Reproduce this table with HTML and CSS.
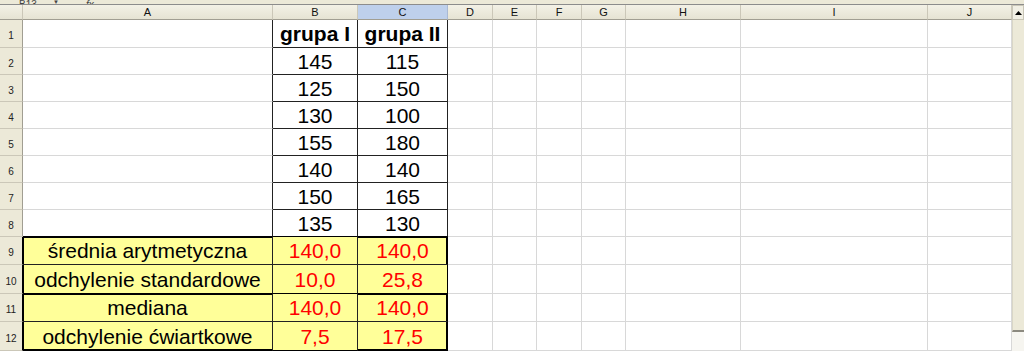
FILE: index.html
```html
<!DOCTYPE html>
<html lang="pl">
<head>
<meta charset="utf-8">
<title>Arkusz</title>
<link rel="stylesheet" href="styles.css">
</head>
<body>
<div class="toolbar">
  <div class="tb-inner"><span class="namebox">B13</span><span class="drop">▼</span><span class="fx">fx</span></div>
</div>
<div class="window">
  <div class="sheet">
    <div class="row hdr">
      <div class="corner"></div>
      <div class="ch">A</div><div class="ch">B</div><div class="ch sel">C</div><div class="ch">D</div><div class="ch">E</div><div class="ch">F</div><div class="ch">G</div><div class="ch">H</div><div class="ch">I</div><div class="ch">J</div>
    </div>
    <div class="row r28">
      <div class="rh">1</div><div class="c edge-r"></div><div class="c bd b">grupa I</div><div class="c bd b">grupa II</div><div class="c"></div><div class="c"></div><div class="c"></div><div class="c"></div><div class="c"></div><div class="c"></div><div class="c"></div>
    </div>
    <div class="row">
      <div class="rh">2</div><div class="c edge-r"></div><div class="c bd">145</div><div class="c bd">115</div><div class="c"></div><div class="c"></div><div class="c"></div><div class="c"></div><div class="c"></div><div class="c"></div><div class="c"></div>
    </div>
    <div class="row">
      <div class="rh">3</div><div class="c edge-r"></div><div class="c bd">125</div><div class="c bd">150</div><div class="c"></div><div class="c"></div><div class="c"></div><div class="c"></div><div class="c"></div><div class="c"></div><div class="c"></div>
    </div>
    <div class="row">
      <div class="rh">4</div><div class="c edge-r"></div><div class="c bd">130</div><div class="c bd">100</div><div class="c"></div><div class="c"></div><div class="c"></div><div class="c"></div><div class="c"></div><div class="c"></div><div class="c"></div>
    </div>
    <div class="row">
      <div class="rh">5</div><div class="c edge-r"></div><div class="c bd">155</div><div class="c bd">180</div><div class="c"></div><div class="c"></div><div class="c"></div><div class="c"></div><div class="c"></div><div class="c"></div><div class="c"></div>
    </div>
    <div class="row">
      <div class="rh">6</div><div class="c edge-r"></div><div class="c bd">140</div><div class="c bd">140</div><div class="c"></div><div class="c"></div><div class="c"></div><div class="c"></div><div class="c"></div><div class="c"></div><div class="c"></div>
    </div>
    <div class="row">
      <div class="rh">7</div><div class="c edge-r"></div><div class="c bd">150</div><div class="c bd">165</div><div class="c"></div><div class="c"></div><div class="c"></div><div class="c"></div><div class="c"></div><div class="c"></div><div class="c"></div>
    </div>
    <div class="row">
      <div class="rh">8</div><div class="c edge-r bb"></div><div class="c bd">135</div><div class="c bd">130</div><div class="c"></div><div class="c"></div><div class="c"></div><div class="c"></div><div class="c"></div><div class="c"></div><div class="c"></div>
    </div>
    <div class="row r28">
      <div class="rh k">9</div><div class="c y top">średnia arytmetyczna</div><div class="c y top red">140,0</div><div class="c y top right red">140,0</div><div class="c"></div><div class="c"></div><div class="c"></div><div class="c"></div><div class="c"></div><div class="c"></div><div class="c"></div>
    </div>
    <div class="row r29">
      <div class="rh k">10</div><div class="c y">odchylenie standardowe</div><div class="c y red">10,0</div><div class="c y right red">25,8</div><div class="c"></div><div class="c"></div><div class="c"></div><div class="c"></div><div class="c"></div><div class="c"></div><div class="c"></div>
    </div>
    <div class="row r28">
      <div class="rh k">11</div><div class="c y top">mediana</div><div class="c y top red">140,0</div><div class="c y top right red">140,0</div><div class="c"></div><div class="c"></div><div class="c"></div><div class="c"></div><div class="c"></div><div class="c"></div><div class="c"></div>
    </div>
    <div class="row r29">
      <div class="rh k">12</div><div class="c y bot">odchylenie ćwiartkowe</div><div class="c y bot red">7,5</div><div class="c y bot right red">17,5</div><div class="c"></div><div class="c"></div><div class="c"></div><div class="c"></div><div class="c"></div><div class="c"></div><div class="c"></div>
    </div>
  </div>
  <div class="vscroll">
    <div class="sb-btn"><svg width="7" height="4" viewBox="0 0 7 4"><path d="M0 4 L3.5 0 L7 4 Z" fill="#000"/></svg></div>
    <div class="sb-thumb"></div>
    <div class="sb-track"></div>
  </div>
</div>
</body>
</html>
```

FILE: styles.css
```css
* { box-sizing: border-box; }
html, body { margin: 0; padding: 0; }
body {
  width: 1024px;
  height: 353px;
  overflow: hidden;
  background: #fff;
  font-family: "Liberation Sans", Arial, sans-serif;
}

.toolbar {
  height: 5px;
  background: #ece9d8;
  border-bottom: 1px solid #8c8c8c;
  overflow: hidden;
}
.tb-inner {
  display: flex;
  align-items: flex-end;
  height: 4px;
  font-size: 10px;
  line-height: 10px;
  color: #444;
}
.namebox { margin-left: 19px; width: 34px; position: relative; top: 6px; }
.drop { font-size: 6px; width: 33px; position: relative; top: 3px; }
.fx { font-style: italic; position: relative; top: 6px; }

.window { display: flex; }
.sheet { width: 1012px; }

.row {
  display: grid;
  grid-template-columns: 23px 250px 85px 90px 45px 44px 45px 44px 115px 187px 84px;
  height: 27px;
}
.row.r28 { height: 28px; }
.row.r29 { height: 29px; }
.row.hdr { height: 15px; }

.corner, .ch {
  background: linear-gradient(#f3f1e6, #e6e3d3);
  border-right: 1px solid #cbc7b8;
  border-bottom: 1px solid #a19e92;
}
.ch {
  font-size: 11px;
  line-height: 14px;
  text-align: center;
  color: #111;
}
.ch.sel { background: #bed0ec; border-right-color: #a9b9d4; }

.rh {
  background: #ece9d8;
  border-right: 1px solid #a19e92;
  border-bottom: 1px solid #cbc7b8;
  font-size: 10px;
  color: #222;
  display: flex;
  align-items: center;
  justify-content: center;
  padding-top: 4px;
}
.rh.k { border-right-color: #000; }

.c {
  border-right: 1px solid #d8d8d8;
  border-bottom: 1px solid #d8d8d8;
  font-size: 21px;
  color: #000;
  display: flex;
  align-items: center;
  justify-content: center;
  white-space: nowrap;
  padding-top: 1px;
}
.c.b { font-weight: bold; }
.c.edge-r { border-right-color: #222; }
.c.bb { border-bottom-color: #000; }
.c.bd { border-right-color: #222; border-bottom-color: #222; }
.row:nth-child(9) .c.bd { border-bottom-color: #000; }

.c.y {
  background: #ffff99;
  border-right-color: #222;
  border-bottom-color: #222;
  box-shadow: inset 1px 0 0 #000;
}
.c.y + .c.y { box-shadow: none; }
.c.y.top { box-shadow: inset 0 1px 0 #000; }
.c.y.top:first-child, .rh + .c.y.top { box-shadow: inset 1px 1px 0 #000; }
.c.y.right { border-right-color: #000; box-shadow: inset -1px 0 0 #000; }
.c.y.top.right { box-shadow: inset -1px 1px 0 #000; }
.row:nth-child(11) .c.y { border-bottom-color: #000; }
.c.y.bot { border-bottom-color: #000; box-shadow: inset 0 -1px 0 #000; }
.rh + .c.y.bot { box-shadow: inset 1px -1px 0 #000; }
.c.y.bot.right { box-shadow: inset -1px -1px 0 #000; }
.c.red { color: #ff0000; }

.vscroll {
  width: 12px;
  display: flex;
  flex-direction: column;
  background: #f4f3ee;
}
.sb-btn {
  height: 15px;
  background: #f1efe4;
  border: 1px solid #c9c6b7;
  display: flex;
  align-items: center;
  justify-content: center;
}
.sb-thumb {
  height: 312px;
  background: #ece9d8;
  border-left: 1px solid #d9d6c6;
  border-bottom: 2px solid #8c8a80;
}
.sb-track { flex: 1; background: #f6f5f0; }
```
